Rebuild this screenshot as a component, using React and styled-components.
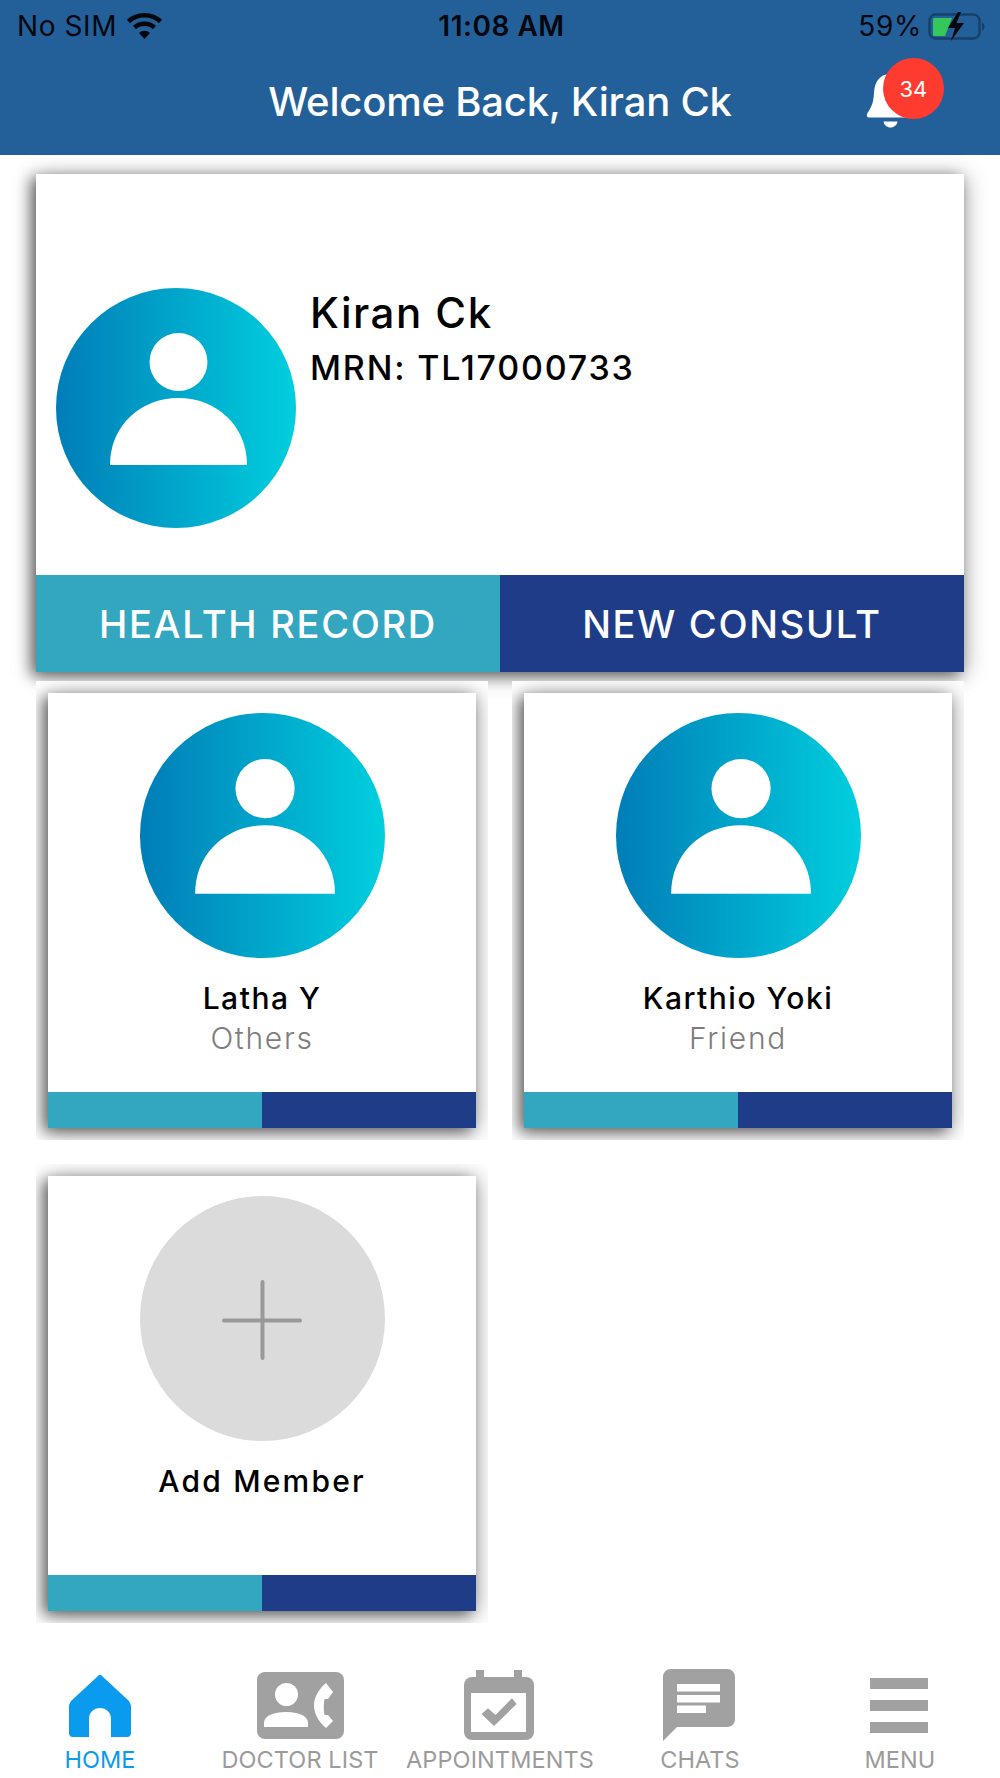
import React from "react";
import styled, { createGlobalStyle } from "styled-components";

const Global = createGlobalStyle`
  html, body { margin: 0; padding: 0; background: #fff; }
  body { font-family: "Inter", "Liberation Sans", sans-serif; }
  * { box-sizing: border-box; }
`;

const cardShadow = "-5px 4px 14px rgba(0, 0, 0, 0.55), 2px 2px 22px rgba(0, 0, 0, 0.28)";

const Screen = styled.div`
  width: 1000px;
  height: 1778px;
  display: flex;
  flex-direction: column;
  background: #fff;
  overflow: hidden;
`;

const Header = styled.header`
  height: 155px;
  flex: none;
  background: #236099;
  display: flex;
  flex-direction: column;
`;

const StatusBar = styled.div`
  height: 51px;
  display: grid;
  grid-template-columns: 1fr auto 1fr;
  align-items: center;
  padding: 0 14px 0 17px;
  color: #05070f;
  font-size: 28px;
  letter-spacing: 0.6px;
`;

const StatusLeft = styled.div`
  display: flex;
  align-items: center;
  gap: 9px;
`;

const StatusTime = styled.div`
  font-weight: 600;
  font-size: 28px;
  letter-spacing: 0.5px;
`;

const StatusRight = styled.div`
  display: flex;
  align-items: center;
  justify-content: flex-end;
  gap: 6px;
`;

const TitleRow = styled.div`
  flex: 1;
  display: grid;
  grid-template-columns: 1fr auto 1fr;
  align-items: center;
`;

const Title = styled.h1`
  margin: 0 0 2px;
  color: #fff;
  font-size: 40px;
  font-weight: 500;
  line-height: 1;
  letter-spacing: -0.2px;
`;

const BellWrap = styled.div`
  position: relative;
  width: 50px;
  height: 58px;
  margin-left: 134px;
  margin-bottom: 8px;
`;

const Badge = styled.span`
  position: absolute;
  left: 17px;
  top: -12px;
  width: 61px;
  height: 61px;
  border-radius: 50%;
  background: #ff3b30;
  color: #fff;
  font-size: 22px;
  display: flex;
  align-items: center;
  justify-content: center;
`;

const Main = styled.main`
  flex: 1;
  padding: 19px 36px 0;
`;

const Hero = styled.section`
  height: 498px;
  background: #fff;
  display: flex;
  flex-direction: column;
  box-shadow: ${cardShadow};
`;

const HeroBody = styled.div`
  flex: 1;
  display: flex;
  padding: 114px 0 0 20px;
`;

const HeroInfo = styled.div`
  margin-left: 14px;
`;

const HeroName = styled.div`
  font-size: 42px;
  line-height: 50px;
  font-weight: 500;
  color: #000;
  letter-spacing: 1.5px;
`;

const HeroMrn = styled.div`
  margin-top: 10px;
  font-size: 34px;
  line-height: 40px;
  font-weight: 500;
  color: #000;
  letter-spacing: 1.8px;
`;

const ActionBar = styled.div`
  display: flex;
  height: ${(p) => p.$height}px;
  flex: none;
  margin-top: ${(p) => (p.$pushed ? "auto" : "0")};
`;

const Action = styled.div`
  flex: 1;
  display: flex;
  align-items: center;
  justify-content: center;
  color: #fff;
  background: ${(p) => (p.$dark ? "#1f3c88" : "#33a7bf")};
  font-size: 38px;
  font-weight: 500;
  letter-spacing: 1.7px;
`;

const Members = styled.div`
  margin-top: 9px;
  display: grid;
  grid-template-columns: 452px 452px;
  grid-auto-rows: 459px;
  gap: 24px;
`;

const Cell = styled.div`
  overflow: hidden;
  background: #fff;
  padding: 12px;
`;

const MemberCard = styled.article`
  height: 435px;
  background: #fff;
  display: flex;
  flex-direction: column;
  align-items: stretch;
  padding-top: 20px;
  box-shadow: ${cardShadow};
`;

const AvatarSlot = styled.div`
  display: flex;
  justify-content: center;
  flex: none;
`;

const MemberName = styled.div`
  margin-top: 20px;
  text-align: center;
  font-size: 30px;
  line-height: 40px;
  font-weight: 500;
  color: #000;
  letter-spacing: ${(p) => (p.$wide ? "2.2px" : "1.5px")};
`;

const MemberRole = styled.div`
  text-align: center;
  font-size: 30px;
  line-height: 40px;
  font-weight: 300;
  color: #7d7d7d;
  letter-spacing: 1.7px;
`;

const TabBar = styled.nav`
  height: 155px;
  flex: none;
  display: grid;
  grid-template-columns: repeat(5, 200px);
  background: #fff;
`;

const Tab = styled.div`
  display: flex;
  flex-direction: column;
  align-items: center;
  color: ${(p) => (p.$active ? "#0a9bef" : "#9b9b9b")};
  font-size: 23.5px;
  letter-spacing: 0.1px;
  white-space: nowrap;
`;

const TabIcon = styled.div`
  height: 74px;
  margin-top: 45px;
  display: flex;
  align-items: flex-start;
  justify-content: center;
`;

const TabLabel = styled.div`
  margin-top: 4px;
  line-height: 28px;
`;

function Avatar({ size, id }) {
  return (
    <svg width={size} height={size} viewBox="0 0 240 240" style={{ flex: "none", display: "block" }}>
      <defs>
        <linearGradient id={id} x1="0" y1="0" x2="1" y2="0">
          <stop offset="0" stopColor="#007db7" />
          <stop offset="1" stopColor="#00cfde" />
        </linearGradient>
      </defs>
      <circle cx="120" cy="120" r="120" fill={`url(#${id})`} />
      <circle cx="122.5" cy="74" r="29" fill="#fff" />
      <path d="M54 177 C54 138 84 110 122.5 110 C161 110 191 138 191 177 Z" fill="#fff" />
    </svg>
  );
}

function AddAvatar() {
  return (
    <svg width="245" height="245" viewBox="0 0 245 245" style={{ display: "block" }}>
      <circle cx="122.5" cy="122.5" r="122.5" fill="#dbdbdb" />
      <path d="M84 124.5H160M122.5 86V162" stroke="#999" strokeWidth="4" strokeLinecap="round" />
    </svg>
  );
}

function Wifi() {
  return (
    <svg width="37" height="27" viewBox="0 0 37 27">
      <path d="M2.5 9.5C11 1.2 26 1.2 34.5 9.5" fill="none" stroke="#05070f" strokeWidth="4.6" />
      <path d="M8.5 15.5C14 10.5 23 10.5 28.5 15.5" fill="none" stroke="#05070f" strokeWidth="4.6" />
      <path d="M13 21L18.5 27L24 21C21 18 16 18 13 21Z" fill="#05070f" />
    </svg>
  );
}

function Battery() {
  return (
    <svg width="58" height="30" viewBox="0 0 58 30">
      <rect x="1.5" y="3.5" width="50" height="24" rx="6" fill="none" stroke="#16406a" strokeWidth="2.4" />
      <path d="M54 11.5C56 12.5 56.5 13.5 56.5 15.5C56.5 17.5 56 18.5 54 19.5Z" fill="#16406a" />
      <path d="M7 7H24L17 25H7C5.5 25 5 24.5 5 23V9C5 7.5 5.5 7 7 7Z" fill="#35c759" />
      <path d="M30 1L20 17H27L23 30L36 12H28.5L33 1Z" fill="#05070f" />
    </svg>
  );
}

function Bell() {
  return (
    <svg width="50" height="58" viewBox="0 0 50 58" style={{ display: "block" }}>
      <path d="M24 4C13 4 8.5 13 8 23C7.5 33 5 38 1.5 43C0 45.5 1 47.5 3.5 47.5H46C48.5 47.5 49 45.5 47.5 43C44 38 41 33 40 23C39.5 13 35 4 24 4Z" fill="#fff" />
      <path d="M17.5 51.5H31.5C31 55 28 57.5 24.5 57.5C21 57.5 18 55 17.5 51.5Z" fill="#fff" />
    </svg>
  );
}

function HomeIcon() {
  return (
    <svg width="62" height="62" viewBox="0 0 62 62" style={{ marginTop: 7 }}>
      <path
        d="M31 0C30 0 29 0.5 28.5 1.5L2 26C0.7 28.5 0 29.5 0 32V58C0 60.5 1.5 62 4 62H20V44C20 37 25 33 31 33C37 33 42 37 42 44V62H58C60.5 62 62 60.5 62 58V32C62 29.5 61.3 28.5 60 26L33.5 1.5C33 0.5 32 0 31 0Z"
        fill="#0a9bef"
      />
    </svg>
  );
}

function DoctorIcon() {
  return (
    <svg width="87" height="67" viewBox="0 0 87 67" style={{ marginTop: 4 }}>
      <rect x="0" y="0" width="87" height="67" rx="8" fill="#a1a1a1" />
      <ellipse cx="29.5" cy="22.5" rx="11.5" ry="11.5" fill="#fff" />
      <path d="M7 55V51C7 45 14 40 29 40C44 40 51 45 51 51V55Z" fill="#fff" />
      <path
        d="M69 11L76 20L71 27L67.5 27C66.5 32 66.5 38 67.5 43L71 43L76 49L69 56C62 50 57 42 57 33.5C57 25 62 17 69 11Z"
        fill="#fff"
      />
    </svg>
  );
}

function CalendarIcon() {
  return (
    <svg width="70" height="71" viewBox="0 0 70 71" style={{ marginTop: 2, marginLeft: -3 }}>
      <rect x="12" y="0" width="8" height="12" fill="#a1a1a1" />
      <rect x="50" y="0" width="8" height="12" fill="#a1a1a1" />
      <rect x="0" y="7" width="70" height="63" rx="8" fill="#a1a1a1" />
      <rect x="7" y="23" width="55" height="39" fill="#fff" />
      <path d="M17.5 44L24 38.3L31.5 45L48 28.3L52.6 34L30 56Z" fill="#a1a1a1" />
    </svg>
  );
}

function ChatIcon() {
  return (
    <svg width="72" height="72" viewBox="0 0 72 72" style={{ marginTop: 1, marginLeft: -3 }}>
      <path
        d="M8 0H64C68.5 0 72 3.5 72 8V50C72 55 68.5 58 64 58H14L0 72V8C0 3.5 3.5 0 8 0Z"
        fill="#a1a1a1"
      />
      <rect x="14" y="15" width="43" height="7.5" fill="#fff" />
      <rect x="14" y="26" width="43" height="7.5" fill="#fff" />
      <rect x="14" y="36.5" width="29" height="7.5" fill="#fff" />
    </svg>
  );
}

function MenuIcon() {
  return (
    <svg width="58" height="55" viewBox="0 0 58 55" style={{ marginTop: 10, marginLeft: -2 }}>
      <rect x="0" y="0" width="58" height="11" fill="#a1a1a1" />
      <rect x="0" y="22" width="58" height="11" fill="#a1a1a1" />
      <rect x="0" y="44" width="58" height="11" fill="#a1a1a1" />
    </svg>
  );
}

const members = [
  { id: "a1", name: "Latha Y", role: "Others" },
  { id: "a2", name: "Karthio Yoki", role: "Friend" },
];

const tabs = [
  { label: "HOME", Icon: HomeIcon, active: true },
  { label: "DOCTOR LIST", Icon: DoctorIcon },
  { label: "APPOINTMENTS", Icon: CalendarIcon },
  { label: "CHATS", Icon: ChatIcon },
  { label: "MENU", Icon: MenuIcon },
];

export default function App() {
  return (
    <Screen>
      <Global />
      <Header>
        <StatusBar>
          <StatusLeft>
            No SIM <Wifi />
          </StatusLeft>
          <StatusTime>11:08 AM</StatusTime>
          <StatusRight>
            59% <Battery />
          </StatusRight>
        </StatusBar>
        <TitleRow>
          <span />
          <Title>Welcome Back, Kiran Ck</Title>
          <BellWrap>
            <Bell />
            <Badge>34</Badge>
          </BellWrap>
        </TitleRow>
      </Header>
      <Main>
        <Hero>
          <HeroBody>
            <Avatar size={240} id="hero" />
            <HeroInfo>
              <HeroName>Kiran Ck</HeroName>
              <HeroMrn>MRN: TL17000733</HeroMrn>
            </HeroInfo>
          </HeroBody>
          <ActionBar $height={97}>
            <Action>HEALTH RECORD</Action>
            <Action $dark>NEW CONSULT</Action>
          </ActionBar>
        </Hero>
        <Members>
          {members.map((m) => (
            <Cell key={m.id}>
              <MemberCard>
                <AvatarSlot>
                  <Avatar size={245} id={m.id} />
                </AvatarSlot>
                <MemberName>{m.name}</MemberName>
                <MemberRole>{m.role}</MemberRole>
                <ActionBar $height={36} $pushed>
                  <Action />
                  <Action $dark />
                </ActionBar>
              </MemberCard>
            </Cell>
          ))}
          <Cell>
            <MemberCard>
              <AvatarSlot>
                <AddAvatar />
              </AvatarSlot>
              <MemberName $wide>Add Member</MemberName>
              <ActionBar $height={36} $pushed>
                <Action />
                <Action $dark />
              </ActionBar>
            </MemberCard>
          </Cell>
        </Members>
      </Main>
      <TabBar>
        {tabs.map(({ label, Icon, active }) => (
          <Tab key={label} $active={active}>
            <TabIcon>
              <Icon />
            </TabIcon>
            <TabLabel>{label}</TabLabel>
          </Tab>
        ))}
      </TabBar>
    </Screen>
  );
}
